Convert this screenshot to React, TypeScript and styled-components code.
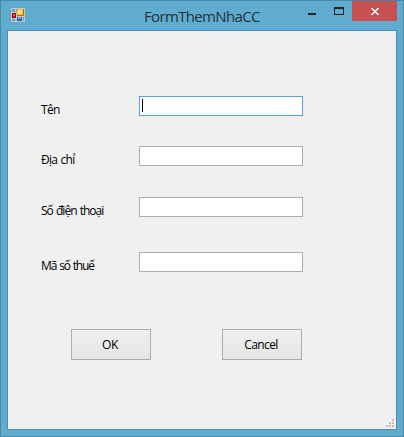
import React from "react";
import styled, { createGlobalStyle } from "styled-components";

const GlobalStyle = createGlobalStyle`
  * { box-sizing: border-box; }
  body { margin: 0; overflow: hidden; }
`;

const Window = styled.div`
  width: 404px;
  height: 437px;
  padding: 0 6px 6px;
  background: #5facd0;
  border: 1px solid #4a89a5;
  display: flex;
  flex-direction: column;
  font-family: "Open Sans", "Noto Sans", sans-serif;
`;

const TitleBar = styled.header`
  height: 29px;
  flex: none;
  display: flex;
  align-items: flex-start;
  padding: 0 0 0 4px;
`;

const AppIcon = styled.svg`
  width: 14px;
  height: 14px;
  margin-top: 7px;
  flex: none;
`;

const Title = styled.h1`
  margin: 4px 0 0;
  flex: 1;
  padding-left: 119px;
  font-size: 15px;
  font-weight: 400;
  line-height: 22px;
  letter-spacing: -0.65px;
  color: #263238;
  white-space: nowrap;
`;

const CaptionButton = styled.button<{ $width: number; $close?: boolean }>`
  width: ${(p) => p.$width}px;
  height: 20px;
  flex: none;
  padding: 0;
  border: 0;
  background: ${(p) => (p.$close ? "#c75050" : "transparent")};
  svg { display: block; }
`;

const Client = styled.main`
  position: relative;
  flex: 1;
  background: #f0f0f0;
  border: 1px solid #4d8eac;
  padding: 65px 0 0 33px;
`;

const Row = styled.div<{ $gap: number }>`
  display: grid;
  grid-template-columns: 98px 164px;
  height: 20px;
  margin-bottom: ${(p) => p.$gap}px;
`;

const Label = styled.label<{ $spacing: number }>`
  margin-top: 5px;
  font-size: 12px;
  line-height: 18px;
  letter-spacing: ${(p) => p.$spacing}px;
  word-spacing: 1px;
  color: #000;
  white-space: nowrap;
`;

const Field = styled.div<{ $focused?: boolean }>`
  height: 20px;
  padding: 2px;
  background: #fff;
  border: 1px solid ${(p) => (p.$focused ? "#569de5" : "#abadb3")};
`;

const Caret = styled.div`
  width: 1px;
  height: 13px;
  background: #000;
`;

const Actions = styled.div`
  display: flex;
  gap: 71px;
  padding-left: 30px;
`;

const Button = styled.button<{ $spacing: number }>`
  width: 80px;
  height: 31px;
  padding: 1px 2px 0 0;
  border: 1px solid #acacac;
  border-radius: 0;
  background: linear-gradient(#f0f0f0, #e5e5e5);
  font-family: inherit;
  font-size: 12px;
  line-height: 18px;
  letter-spacing: ${(p) => p.$spacing}px;
  color: #000;
`;

const Grip = styled.svg`
  position: absolute;
  right: 2px;
  bottom: 2px;
  width: 8px;
  height: 8px;
`;

const fields = [
  { label: "Tên", gap: 30, spacing: -0.65 },
  { label: "Địa chỉ", gap: 31, spacing: -0.75 },
  { label: "Số điện thoại", gap: 35, spacing: -0.98 },
  { label: "Mã số thuế", gap: 57, spacing: -1.15 },
];

export default function App() {
  return (
    <>
      <GlobalStyle />
      <Window>
        <TitleBar>
          <AppIcon viewBox="0 0 14 14" shapeRendering="crispEdges">
            <path fill="#c5c5c5" d="M0 0h14v14H0z" />
            <path fill="#5facd0" d="M1 1h3v3H1zM5 1h1v3H5zM1 11h3v2H1zM12 9h1v4h-1z" />
            <path fill="#a87410" d="M6 1h7v7H6z" />
            <path fill="#f5b91d" d="M6 1h6v6H6z" />
            <path fill="#ffe177" d="M7 2h4v4H7z" />
            <path fill="#a81212" d="M1 5h4v5H1z" />
            <path fill="#e94b3c" d="M2 6h2v2H2z" />
            <path fill="#2861c4" d="M6 9h5v4H6z" />
            <path fill="#76a7ee" d="M7 9h3v2H7z" />
          </AppIcon>
          <Title>FormThemNhaCC</Title>
          <CaptionButton $width={26} aria-label="Minimize">
            <svg width="26" height="20" shapeRendering="crispEdges">
              <path fill="#222" d="M8 12h8v2H8z" />
            </svg>
          </CaptionButton>
          <CaptionButton $width={26} aria-label="Maximize">
            <svg width="26" height="20" shapeRendering="crispEdges">
              <path fill="#222" fillRule="evenodd" d="M8 6h10v8H8zM9 8v5h8V8z" />
            </svg>
          </CaptionButton>
          <CaptionButton $width={45} $close aria-label="Close">
            <svg width="45" height="20" shapeRendering="crispEdges">
              <path
                fill="#fff"
                d="M19 7h2v1h1v1h2V8h1V7h2v1h-1v1h-1v1h-1v1h1v1h1v1h1v1h-2v-1h-1v-1h-2v1h-1v1h-2v-1h1v-1h1v-1h1v-1h-1V9h-1V8h-1z"
              />
            </svg>
          </CaptionButton>
        </TitleBar>
        <Client>
          {fields.map((f, i) => (
            <Row key={f.label} $gap={f.gap}>
              <Label $spacing={f.spacing}>{f.label}</Label>
              <Field $focused={i === 0}>{i === 0 && <Caret />}</Field>
            </Row>
          ))}
          <Actions>
            <Button $spacing={-0.3}>OK</Button>
            <Button $spacing={-0.6}>Cancel</Button>
          </Actions>
          <Grip viewBox="0 0 8 8" shapeRendering="crispEdges">
            <path
              fill="#bdbdbd"
              d="M6 0h2v2H6zM3 3h2v2H3zM6 3h2v2H6zM0 6h2v2H0zM3 6h2v2H3zM6 6h2v2H6z"
            />
          </Grip>
        </Client>
      </Window>
    </>
  );
}
